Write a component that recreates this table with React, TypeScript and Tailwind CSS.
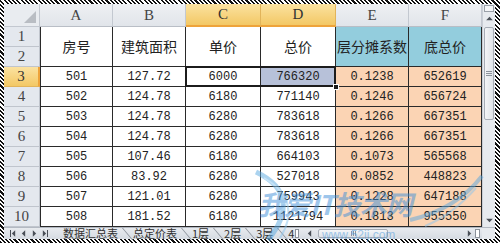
import React from "react";

const cols = ["A", "B", "C", "D", "E", "F"];
const heads = ["房号", "建筑面积", "单价", "总价", "层分摊系数", "底总价"];

const rows = [
  ["3", "501", "127.72", "6000", "766320", "0.1238", "652619"],
  ["4", "502", "124.78", "6180", "771140", "0.1246", "656724"],
  ["5", "503", "124.78", "6280", "783618", "0.1266", "667351"],
  ["6", "504", "124.78", "6280", "783618", "0.1266", "667351"],
  ["7", "505", "107.46", "6180", "664103", "0.1073", "565568"],
  ["8", "506", "83.92", "6280", "527018", "0.0852", "448823"],
  ["9", "507", "121.01", "6280", "759943", "0.1228", "647188"],
  ["10", "508", "181.52", "6180", "1121794", "0.1813", "955550"],
];

const tabs = ["数据汇总表", "总定价表", "1层", "2层", "3层", "4"];

const serif = "font-['Liberation_Serif',serif]";
const mono = "font-['Liberation_Mono',monospace]";
const cjk = "font-['Noto_Sans_CJK_SC',sans-serif]";

const Tri = ({ dir }: { dir: "up" | "down" | "left" | "right" }) => {
  const pts = {
    up: "0,5 4,1 8,5",
    down: "0,1 4,5 8,1",
    left: "5,0 1,4 5,8",
    right: "1,0 5,4 1,8",
  }[dir];
  const box = dir === "up" || dir === "down" ? "0 0 8 6" : "0 0 6 8";
  return (
    <svg viewBox={box} className={dir === "up" || dir === "down" ? "w-[7px] h-[5px]" : "w-[5px] h-[7px]"}>
      <polygon points={pts} fill="#4a4f57" />
    </svg>
  );
};

const Watermark = () => (
  <div className="absolute left-[250px] top-[168px] w-[235px] h-[75px] pointer-events-none opacity-50">
    <svg viewBox="0 0 235 75" className="absolute inset-0 w-full h-full">
      <path d="M6 4 C 40 20, 40 45, 18 72" stroke="#5aa8e0" strokeWidth="5" fill="none" />
      <path d="M14 10 C 42 26, 44 48, 30 70" stroke="#8cc6ee" strokeWidth="2" fill="none" />
      <path d="M232 8 C 215 30, 190 45, 160 52" stroke="#5aa8e0" strokeWidth="4" fill="none" />
      <path d="M226 20 C 210 38, 195 50, 175 58" stroke="#8cc6ee" strokeWidth="2" fill="none" />
    </svg>
    <div className={`absolute left-[8px] top-[22px] text-[27px] leading-none font-bold text-[#3f8fd8] ${cjk} tracking-[-1px] italic`}>
      我爱IT技术网
    </div>
    <div className="absolute left-[72px] top-[61px] text-[12px] leading-none text-[#4b9ae0] font-['Liberation_Sans',sans-serif]">
      www.52ij.com
    </div>
  </div>
);

export default function App() {
  return (
    <div className="relative w-[500px] h-[243px] overflow-hidden bg-[repeating-linear-gradient(45deg,#111_0_1.5px,#fff_1.5px_3px)] pt-[4px] pl-[4px] pr-[5px] pb-[4px]">
      <div className="w-[491px] h-[235px] flex flex-col bg-white">
        <div className="flex h-[223px]">
          <div className="grid grid-cols-[36px_73px_73px_75px_75px_73px_73px] grid-rows-[23px_repeat(10,20px)] text-[#222]">
            {/* corner */}
            <div className="relative bg-[#e9ecf0] border-r border-b border-[#c3c8d0]">
              <div className="absolute right-[3px] bottom-[3px] w-0 h-0 border-l-[12px] border-l-transparent border-b-[12px] border-b-[#b9bdc3]" />
            </div>
            {cols.map((c, i) => {
              const sel = i === 2 || i === 3;
              return (
                <div
                  key={c}
                  className={`flex items-center justify-center text-[15px] ${serif} border-r ${
                    sel
                      ? "bg-[linear-gradient(#fbe2a0,#f3c865)] border-[#e2b45a] border-b-2 border-b-[#eea33a] text-[#333]"
                      : "bg-[linear-gradient(#eef0f3,#e1e5ea)] border-[#c3c8d0] border-b border-b-[#b9bec6] text-[#444]"
                  }`}
                >
                  {c}
                </div>
              );
            })}
            {/* row 1 header */}
            <div className={`flex items-center justify-center bg-[#e4e8ee] border-r border-b border-[#c0c5cd] text-[15px] text-[#444] ${serif}`}>
              1
            </div>
            {heads.map((h, i) => (
              <div
                key={h}
                className={`row-span-2 flex items-center justify-center text-[14px] ${cjk} border-r border-b border-[#2a2a2a] ${
                  i === 0 ? "border-l" : ""
                } ${i >= 4 ? "bg-[#93cddd]" : "bg-white"}`}
              >
                {h}
              </div>
            ))}
            <div className={`flex items-center justify-center bg-[#e4e8ee] border-r border-b border-[#c0c5cd] text-[15px] text-[#444] ${serif}`}>
              2
            </div>
            {rows.map((r, ri) =>
              r.map((v, ci) => {
                if (ci === 0) {
                  const sel = ri === 0;
                  return (
                    <div
                      key={`${ri}-${ci}`}
                      className={`flex items-center justify-center text-[15px] ${serif} border-r border-b ${
                        sel
                          ? "bg-[linear-gradient(#fbe2a0,#f3c865)] border-[#e2b45a] border-r-[#eea33a] border-r-2 text-[#333]"
                          : "bg-[#e4e8ee] border-[#c0c5cd] text-[#444]"
                      }`}
                    >
                      {v}
                    </div>
                  );
                }
                const orange = ci >= 5;
                const active = ri === 0 && ci === 3;
                const shaded = ri === 0 && ci === 4;
                return (
                  <div
                    key={`${ri}-${ci}`}
                    className={`relative flex items-center justify-center text-[12px] ${mono} border-r border-b border-[#2a2a2a] ${
                      ci === 1 ? "border-l" : ""
                    } ${orange ? "bg-[#fbd4b4]" : shaded ? "bg-[#b7c1d9]" : "bg-white"}`}
                  >
                    {active && <div className="absolute -left-px -top-px right-[-76px] bottom-[-1px] border-2 border-[#1c1c1c] pointer-events-none z-10" />}
                    {shaded && <div className="absolute right-[-4px] bottom-[-4px] w-[6px] h-[6px] bg-[#1c1c1c] border border-white z-20" />}
                    {v}
                  </div>
                );
              })
            )}
          </div>
          {/* vertical scrollbar */}
          <div className="w-[13px] flex flex-col bg-[#e7eaee] border-l border-[#c9ced5]">
            <div className="h-[7px] mx-[1px] mt-[1px] border border-[#9aa0a8] bg-[#f3f4f6]" />
            <div className="h-[13px] flex items-center justify-center">
              <Tri dir="up" />
            </div>
            <div className="flex-1 relative">
              <div className="absolute left-[1px] right-[1px] top-[2px] h-[93px] rounded-[2px] border border-[#a7adb6] bg-[linear-gradient(90deg,#f4f5f7,#dfe3e8)] flex items-center justify-center">
                <div className="flex flex-col gap-[1px]">
                  <div className="w-[6px] h-px bg-[#8d939c]" />
                  <div className="w-[6px] h-px bg-[#8d939c]" />
                  <div className="w-[6px] h-px bg-[#8d939c]" />
                </div>
              </div>
            </div>
            <div className="h-[14px] flex items-center justify-center">
              <Tri dir="down" />
            </div>
          </div>
        </div>
        {/* tab bar */}
        <div className="h-[12px] flex items-center bg-[linear-gradient(#e7eaee,#d6dbe2)] border-t border-[#b3b9c2]">
          <div className="w-[50px] flex items-center justify-around px-[3px]">
            <div className="flex items-center">
              <div className="w-px h-[7px] bg-[#4a4f57]" />
              <Tri dir="left" />
            </div>
            <Tri dir="left" />
            <Tri dir="right" />
            <div className="flex items-center">
              <Tri dir="right" />
              <div className="w-px h-[7px] bg-[#4a4f57]" />
            </div>
          </div>
          <div className={`flex items-center h-full text-[11px] leading-none text-[#333] ${cjk}`}>
            {tabs.map((t, i) => (
              <div key={t} className="flex items-center h-full">
                <div
                  className={`h-full flex items-center ${
                    i === 0 ? "pl-[9px] pr-[9px]" : i === tabs.length - 1 ? "pl-[5px] pr-[1px]" : "pl-[5px] pr-[9px]"
                  }`}
                >
                  {t}
                </div>
                {i < tabs.length - 1 && <div className="w-px h-[12px] bg-[#8c929b] skew-x-[40deg]" />}
              </div>
            ))}
            <div className="w-[4px] h-[9px] border border-[#8c929b] bg-white" />
          </div>
          {/* horizontal scrollbar */}
          <div className="flex-1 flex items-center h-full ml-[4px]">
            <div className="w-[12px] flex items-center justify-center">
              <Tri dir="left" />
            </div>
            <div className="flex-1 relative h-full">
              <div className="absolute left-[3px] w-[70px] top-[1px] bottom-[1px] rounded-[2px] border border-[#a7adb6] bg-[linear-gradient(#f4f5f7,#dfe3e8)] flex items-center justify-center gap-[1px]">
                <div className="w-px h-[5px] bg-[#8d939c]" />
                <div className="w-px h-[5px] bg-[#8d939c]" />
                <div className="w-px h-[5px] bg-[#8d939c]" />
              </div>
            </div>
            <div className="w-[12px] flex items-center justify-center">
              <Tri dir="right" />
            </div>
            <div className="w-[5px] h-[9px] border border-[#8c929b] bg-white mr-[2px]" />
          </div>
          <div className="w-[13px] h-full bg-[#e7eaee]" />
        </div>
      </div>
      <Watermark />
    </div>
  );
}
